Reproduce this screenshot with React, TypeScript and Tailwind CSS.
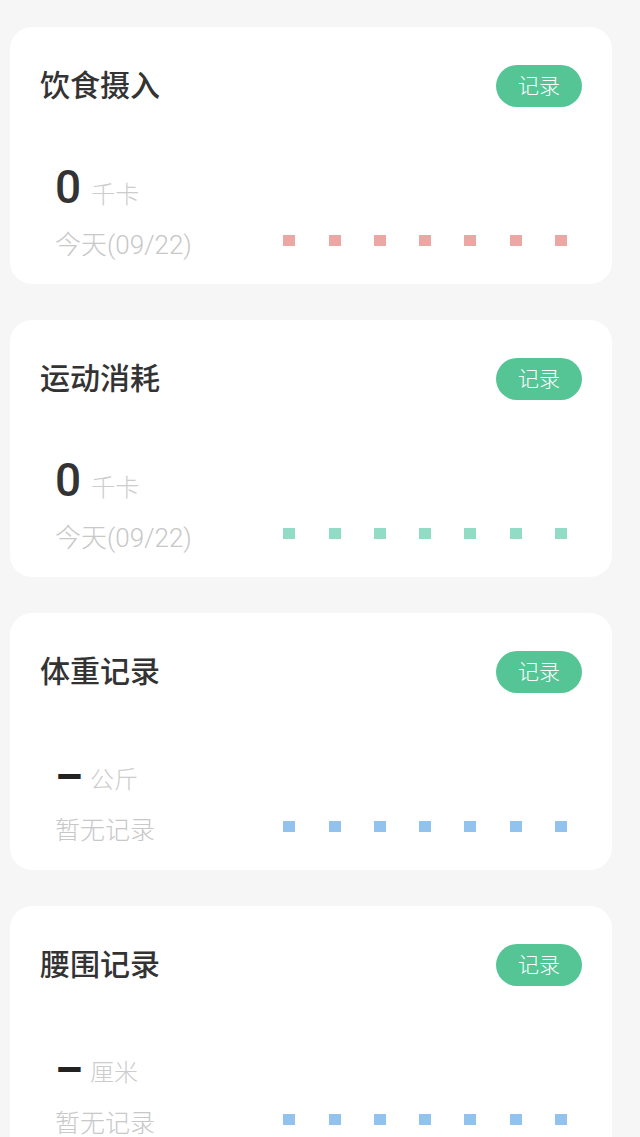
import React from "react";

interface RecordCard {
    title: string;
    value: string;
    unit: string;
    sub: string;
    dotColor: string;
    empty?: boolean;
}

const cards: RecordCard[] = [
    {title: '饮食摄入', value: '0', unit: '千卡', sub: '今天(09/22)', dotColor: 'bg-[#eca7a4]'},
    {title: '运动消耗', value: '0', unit: '千卡', sub: '今天(09/22)', dotColor: 'bg-[#92dcc6]'},
    {title: '体重记录', value: '–', unit: '公斤', sub: '暂无记录', dotColor: 'bg-[#92c3ef]', empty: true},
    {title: '腰围记录', value: '–', unit: '厘米', sub: '暂无记录', dotColor: 'bg-[#92c3ef]', empty: true},
];

function Card({card}: {card: RecordCard}) {
    return (
        <div className="ml-[10px] w-[602px] h-[257px] shrink-0 bg-white rounded-[22px] pt-[38px] px-[30px]">
            <div className="flex justify-between items-center h-[42px]">
                <h2 className="text-[30px] leading-[42px] font-medium text-[#333333]">{card.title}</h2>
                <button className="w-[86px] h-[42px] rounded-full bg-[#55c596] text-white text-[21px] font-light leading-[42px]">
                    记录
                </button>
            </div>

            {card.empty ? (
                <div className="flex items-center pl-[15px] h-[44px] mt-[62px]">
                    <span className="text-[44px] leading-[44px] font-bold text-[#222222] w-[25px]">{card.value}</span>
                    <span className="ml-[10px] mt-[6px] text-[24px] leading-[30px] font-light text-[#cccccc]">{card.unit}</span>
                </div>
            ) : (
                <div className="flex items-baseline pl-[15px] h-[44px] mt-[58px]">
                    <span className="text-[46px] leading-[44px] font-medium text-[#333333]">{card.value}</span>
                    <span className="ml-[10px] text-[24px] font-light text-[#cccccc]">{card.unit}</span>
                </div>
            )}

            <div className={`flex items-center pl-[15px] h-[30px] ${card.empty ? 'mt-[17px]' : 'mt-[21px]'}`}>
                <span className={`${card.empty ? 'text-[25px]' : 'text-[26px]'} leading-[30px] font-light text-[#c8c8c8]`}>{card.sub}</span>
                <div className="ml-auto mr-[15px] mb-[10px] flex gap-[33.3px]">
                    {Array.from({length: 7}).map((_, i) => (
                        <div key={i} className={`w-[12px] h-[11px] ${card.dotColor}`}/>
                    ))}
                </div>
            </div>
        </div>
    );
}

export default function App() {
    return (
        <div
            className="w-[640px] h-[1137px] overflow-hidden bg-[#f6f6f6] pt-[27px] flex flex-col gap-[36px]"
            style={{fontFamily: "Roboto, 'Noto Sans CJK SC', sans-serif"}}
        >
            {cards.map(card => (
                <Card key={card.title} card={card}/>
            ))}
        </div>
    );
}
